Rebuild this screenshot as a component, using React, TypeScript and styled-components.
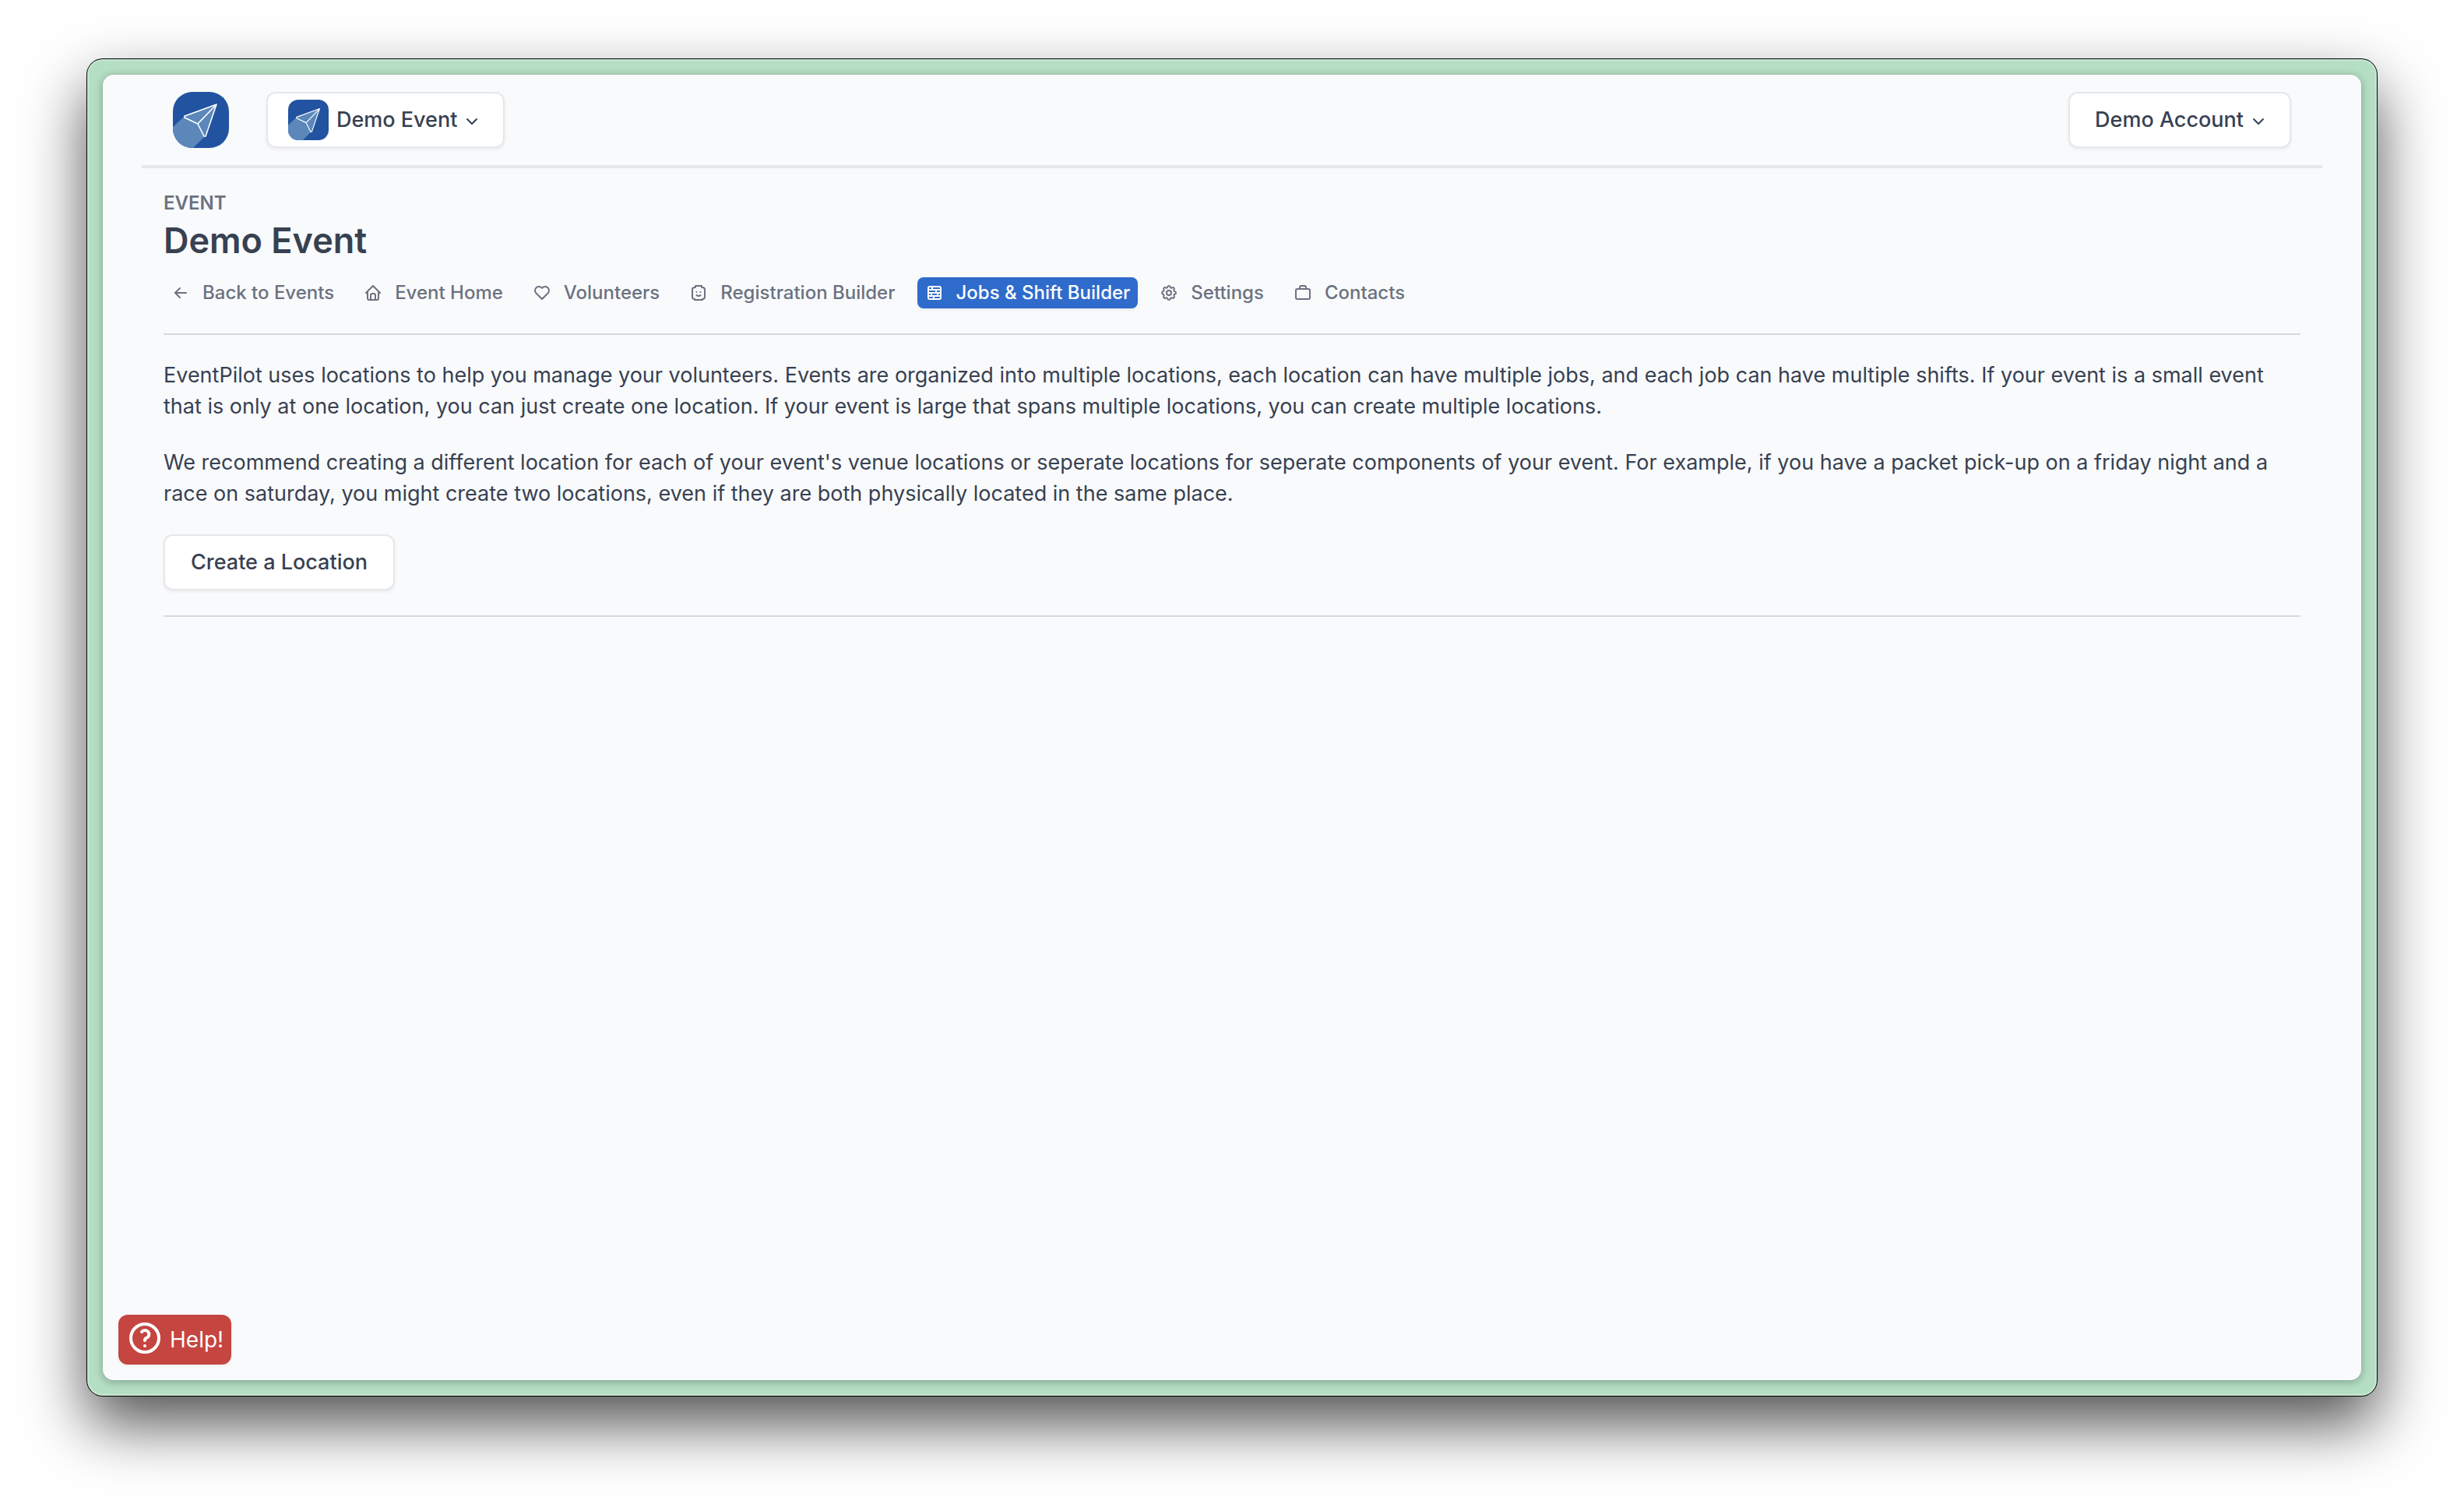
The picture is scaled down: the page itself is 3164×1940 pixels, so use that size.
import React from "react";
import styled, { createGlobalStyle, css } from "styled-components";
import {
  TbArrowLeft,
  TbChevronDown,
  TbHeart,
  TbHelp,
  TbHome,
  TbLego,
  TbSettings,
  TbWall,
} from "react-icons/tb";

const colors = {
  page: "#f9fafc",
  frame: "#b5dfc4",
  text: "#374151",
  muted: "#6b7280",
  line: "#d7d9dc",
  border: "#e5e7eb",
  primary: "#2f6bcb",
  danger: "#c54540",
};

const GlobalStyle = createGlobalStyle`
  *, *::before, *::after { box-sizing: border-box; }
  body {
    margin: 0;
    background: #fff;
    color: ${colors.text};
    font-family: Inter, "Liberation Sans", sans-serif;
    font-size: 27px;
    line-height: 40px;
  }
`;

const Desktop = styled.div`
  display: flex;
  min-height: 100vh;
  padding: 76px 112px 148px;
  overflow: hidden;
`;

const Frame = styled.div`
  display: flex;
  flex: 1;
  padding: 20px;
  border-radius: 20px;
  background: ${colors.frame};
  box-shadow:
    inset 0 0 0 2px rgba(255, 255, 255, 0.25),
    0 0 0 1px #000,
    0 36px 80px rgba(0, 0, 0, 0.69);
`;

const Page = styled.div`
  display: flex;
  flex: 1;
  flex-direction: column;
  padding: 0 50px;
  border-radius: 14px;
  background: ${colors.page};
  box-shadow: 0 2px 12px rgba(0, 0, 0, 0.3);
`;

const TopBar = styled.header`
  display: flex;
  align-items: center;
  gap: 48px;
  height: 120px;
  padding: 0 40px;
  border-bottom: 4px solid ${colors.border};
`;

const HomeLink = styled.a`
  display: flex;
`;

const buttonBox = css`
  display: inline-flex;
  align-items: center;
  height: 72px;
  border: 2px solid ${colors.border};
  border-radius: 12px;
  background: #fff;
  box-shadow: 0 2px 4px rgba(0, 0, 0, 0.06);
  color: ${colors.text};
  font: inherit;
  font-weight: 500;
  cursor: pointer;
`;

const MenuButton = styled.button<{ $withLogo?: boolean; $end?: boolean }>`
  ${buttonBox}
  gap: 10px;
  padding: 0 28px 0 ${(p) => (p.$withLogo ? 26 : 32)}px;
  margin-left: ${(p) => (p.$end ? "auto" : 0)};
`;

const MenuLabel = styled.span`
  display: flex;
  align-items: center;
  gap: 7px;
`;

const Chevron = styled(TbChevronDown)`
  width: 24px;
  height: 24px;
  margin-top: 4px;
`;

const ActionButton = styled.button`
  ${buttonBox}
  align-self: flex-start;
  padding: 0 33px;
`;

const Content = styled.main`
  display: flex;
  flex: 1;
  flex-direction: column;
  padding: 0 28px;
`;

const PageHeader = styled.div`
  display: flex;
  flex-direction: column;
  padding: 29px 0 32px;
  border-bottom: 2px solid ${colors.line};
`;

const Eyebrow = styled.p`
  margin: 0;
  color: ${colors.muted};
  font-size: 24px;
  font-weight: 600;
  line-height: 32px;
`;

const Title = styled.h1`
  margin: 0;
  font-size: 45px;
  font-weight: 600;
  line-height: 64px;
`;

const Nav = styled.nav`
  display: flex;
  flex-wrap: wrap;
  gap: 18px;
  padding-top: 15px;
`;

const NavLink = styled.a<{ $active?: boolean }>`
  display: flex;
  align-items: center;
  gap: 16px;
  height: 40px;
  padding: 0 10px;
  border-radius: 8px;
  background: ${(p) => (p.$active ? colors.primary : "transparent")};
  box-shadow: ${(p) => (p.$active ? "0 2px 4px rgba(0, 0, 0, 0.06)" : "none")};
  color: ${(p) => (p.$active ? "#fff" : colors.muted)};
  font-size: 24px;
  font-weight: 500;
  text-decoration: none;
`;

const Intro = styled.section`
  display: flex;
  flex-direction: column;
  gap: 32px;
  padding: 32px 0;
  border-bottom: 2px solid ${colors.line};
`;

const Paragraph = styled.p`
  margin: 0;
`;

const Footer = styled.footer`
  display: flex;
  margin: 0 -30px;
  padding-bottom: 20px;
`;

const HelpButton = styled.button`
  display: flex;
  align-items: center;
  gap: 8px;
  height: 64px;
  padding: 0 10px;
  border: 0;
  border-radius: 12px;
  background: ${colors.danger};
  box-shadow: 0 2px 4px rgba(0, 0, 0, 0.06);
  color: #fff;
  font: inherit;
  font-size: 28px;
  cursor: pointer;
`;

const HelpIcon = styled(TbHelp)`
  width: 48px;
  height: 48px;
  margin-bottom: 4px;
`;

function Logo({ size }: { size: number }) {
  const clip = `logo-${size}`;
  return (
    <svg width={size} height={size} viewBox="0 0 72 72" aria-hidden="true">
      <clipPath id={clip}>
        <rect width="72" height="72" rx={size > 60 ? 25 : 18} />
      </clipPath>
      <g clipPath={`url(#${clip})`}>
        <rect width="72" height="72" fill="#2253a0" />
        <path d="M-6 51 L15 31 L56 16 L41 57 L20 78 L-6 78Z" fill="#5b87bb" />
        <path
          d="M56 16 L15 31 L15 33 L32 41 L40 57 L42 57Z M56 16 L32 41"
          fill="none"
          stroke="#fff"
          strokeWidth="1.6"
          strokeLinejoin="round"
        />
      </g>
    </svg>
  );
}

function BagIcon({ size }: { size: number }) {
  return (
    <svg
      width={size}
      height={size}
      viewBox="0 0 24 24"
      fill="none"
      stroke="currentColor"
      strokeWidth="2"
      strokeLinecap="round"
      strokeLinejoin="round"
      aria-hidden="true"
    >
      <rect x="3" y="7" width="18" height="13" rx="2" />
      <path d="M8 7V5a2 2 0 0 1 2-2h4a2 2 0 0 1 2 2v2" />
    </svg>
  );
}

const links = [
  { label: "Back to Events", Icon: TbArrowLeft },
  { label: "Event Home", Icon: TbHome },
  { label: "Volunteers", Icon: TbHeart },
  { label: "Registration Builder", Icon: TbLego },
  { label: "Jobs & Shift Builder", Icon: TbWall, active: true },
  { label: "Settings", Icon: TbSettings },
  { label: "Contacts", Icon: BagIcon },
];

export default function App() {
  return (
    <>
      <GlobalStyle />
      <Desktop>
        <Frame>
          <Page>
            <TopBar>
              <HomeLink href="#" aria-label="EventPilot">
                <Logo size={72} />
              </HomeLink>
              <MenuButton type="button" $withLogo>
                <Logo size={52} />
                <MenuLabel>
                  Demo Event
                  <Chevron />
                </MenuLabel>
              </MenuButton>
              <MenuButton type="button" $end>
                <MenuLabel>
                  Demo Account
                  <Chevron />
                </MenuLabel>
              </MenuButton>
            </TopBar>
            <Content>
              <PageHeader>
                <Eyebrow>EVENT</Eyebrow>
                <Title>Demo Event</Title>
                <Nav>
                  {links.map(({ label, Icon, active }) => (
                    <NavLink key={label} href="#" $active={active}>
                      <Icon size={24} />
                      {label}
                    </NavLink>
                  ))}
                </Nav>
              </PageHeader>
              <Intro>
                <Paragraph>
                  EventPilot uses locations to help you manage your volunteers. Events are organized
                  into multiple locations, each location can have multiple jobs, and each job can
                  have multiple shifts. If your event is a small event that is only at one location,
                  you can just create one location. If your event is large that spans multiple
                  locations, you can create multiple locations.
                </Paragraph>
                <Paragraph>
                  We recommend creating a different location for each of your event's venue
                  locations or seperate locations for seperate components of your event. For
                  example, if you have a packet pick-up on a friday night and a race on saturday,
                  you might create two locations, even if they are both physically located in the
                  same place.
                </Paragraph>
                <ActionButton type="button">Create a Location</ActionButton>
              </Intro>
            </Content>
            <Footer>
              <HelpButton type="button">
                <HelpIcon />
                Help!
              </HelpButton>
            </Footer>
          </Page>
        </Frame>
      </Desktop>
    </>
  );
}
